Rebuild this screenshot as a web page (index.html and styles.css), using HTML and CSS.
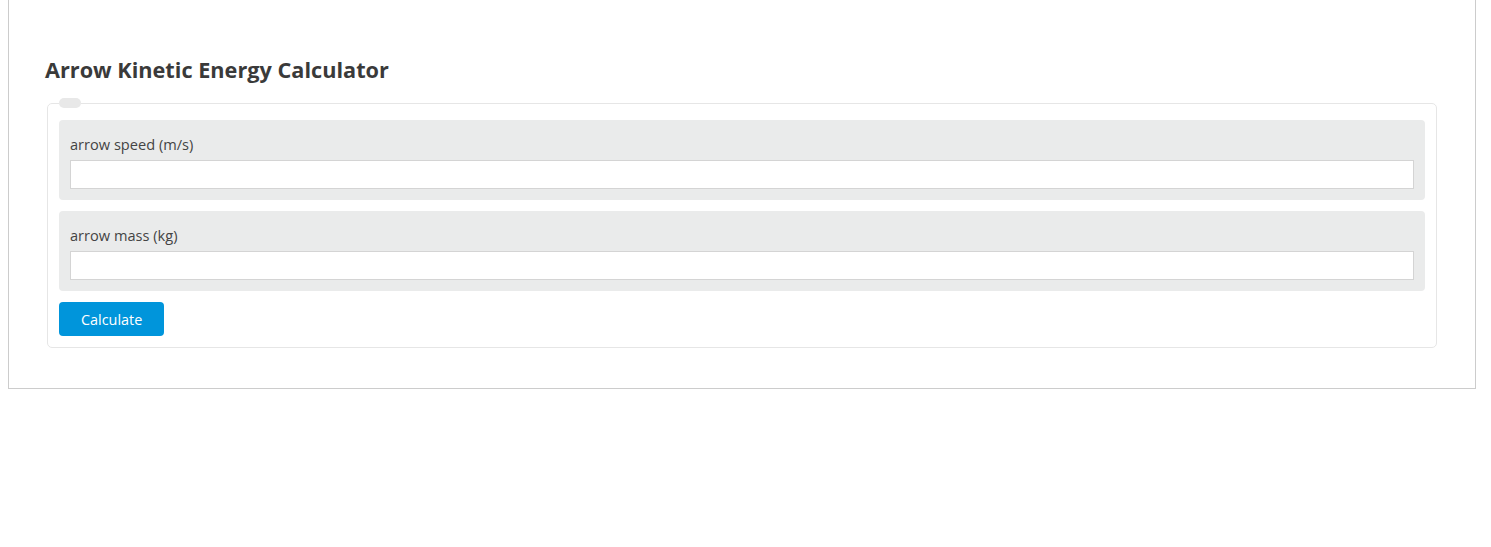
FILE: index.html
```html
<!DOCTYPE html>
<html lang="en">
<head>
    <meta charset="UTF-8">
    <meta name="viewport" content="width=device-width, initial-scale=1.0">
    <title>Arrow Kinetic Energy Calculator</title>
    <link rel="stylesheet" href="styles.css">
</head>
<body>
    <div class="calc-box">
        <h2 class="calc-title">Arrow Kinetic Energy Calculator</h2>
        <form class="calc-form">
            <fieldset>
                <legend></legend>
                <div class="calc-row">
                    <label for="speed">arrow speed (m/s)</label>
                    <input type="text" id="speed">
                </div>
                <div class="calc-row">
                    <label for="mass">arrow mass (kg)</label>
                    <input type="text" id="mass">
                </div>
                <button type="button" class="calc-btn">Calculate</button>
            </fieldset>
        </form>
    </div>
</body>
</html>
```

FILE: styles.css
```css
body {
    font-family: "Open Sans", "Noto Sans", sans-serif;
    margin: 0 15px 0 8px;
    color: #444;
    background: #fff;
}
.calc-box {
    border: 1px solid #ccc;
    border-top: none;
    padding: 56px 38px 40px 38px;
}
.calc-title {
    font-size: 21.7px;
    font-weight: bold;
    color: #3a3a3a;
    margin: 0 0 14px -2px;
    line-height: 28px;
}
.calc-form {
    margin: 0;
}
fieldset {
    border: 1px solid #e6e6e6;
    border-radius: 5px;
    padding: 12px 11px 11px 11px;
    margin: 0;
}
legend {
    background: #e8e8e8;
    border-radius: 6px;
    width: 22px;
    height: 10px;
    padding: 0;
    margin-left: 0;
}
.calc-row {
    background: #eaebeb;
    border-radius: 4px;
    padding: 14px 11px 11px 11px;
    margin-bottom: 11px;
}
.calc-row label {
    display: block;
    font-size: 14.6px;
    line-height: 20px;
    margin-bottom: 6px;
    color: #444;
}
.calc-row input {
    display: block;
    box-sizing: border-box;
    width: 100%;
    height: 29px;
    border: 1px solid #d4d4d4;
    background: #fff;
    margin: 0;
    padding: 0 6px;
    font-family: inherit;
}
.calc-btn {
    background: #0095db;
    color: #fff;
    border: none;
    border-radius: 4px;
    font-family: inherit;
    font-size: 14.4px;
    height: 34px;
    padding: 0 22px 0 22px;
    cursor: pointer;
}
```
